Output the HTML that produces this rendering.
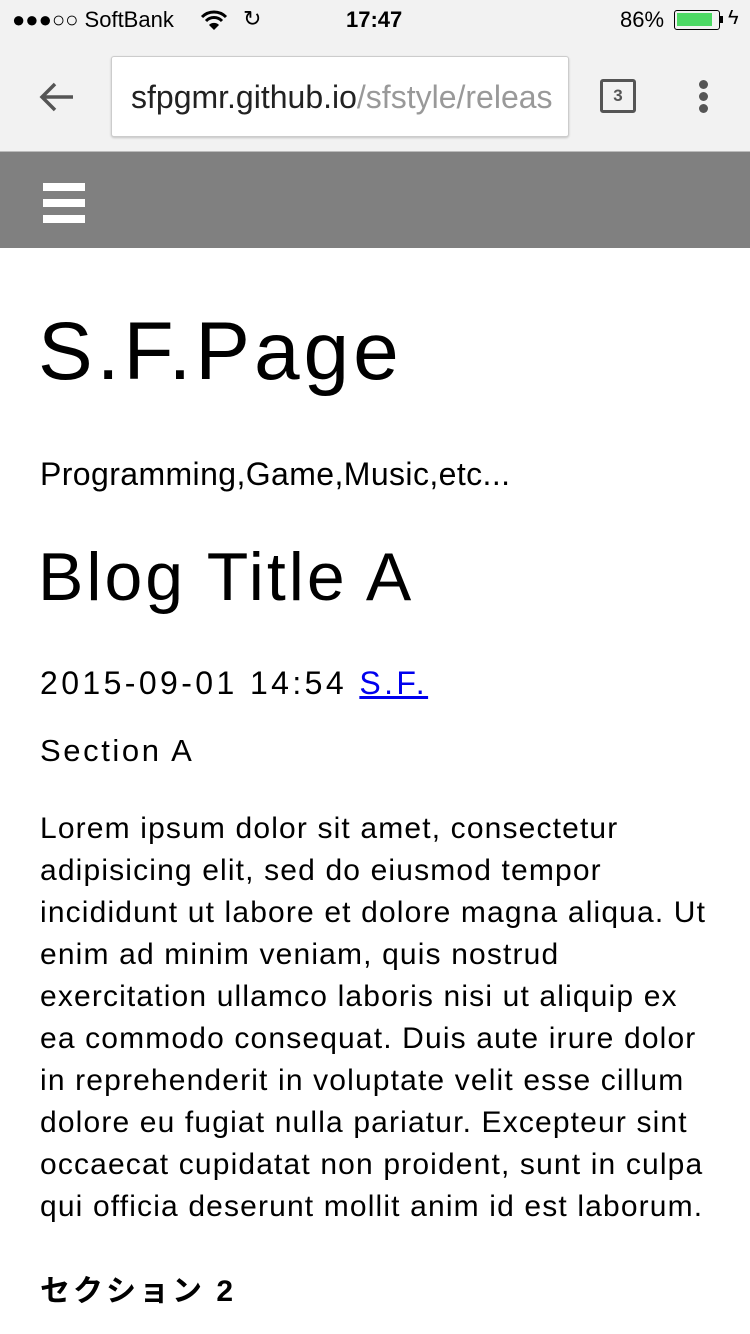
<!DOCTYPE html>
<html><head><meta charset="utf-8"><style>
*{margin:0;padding:0;box-sizing:border-box}
body{width:750px;height:1334px;overflow:hidden;background:#fff;font-family:"Liberation Sans","Noto Sans CJK JP",sans-serif;color:#000;position:relative}
.abs{position:absolute;white-space:nowrap}
#status{position:absolute;left:0;top:0;width:750px;height:40px;background:#f2f2f2}
#bar{position:absolute;left:0;top:40px;width:750px;height:112px;background:#f2f2f2;border-bottom:1px solid #bbb}
#url{position:absolute;left:111px;top:56px;width:458px;height:81px;background:#fff;border:1px solid #ccc;border-radius:3px;box-shadow:0 1px 2px rgba(0,0,0,.2);overflow:hidden}
#nav{position:absolute;left:0;top:152px;width:750px;height:96px;background:#808080}
.hb{position:absolute;left:43px;width:42px;height:8px;background:#fff}
</style></head><body>
<div id="status">
<div class="abs" style="left:12px;top:7px;font-size:22px;color:#000">●●●○○ SoftBank</div>
<svg class="abs" style="left:200px;top:10px" width="28" height="22" viewBox="0 0 28 22"><path d="M2 7 A17 17 0 0 1 26 7" stroke="#000" stroke-width="3" fill="none"/><path d="M6 11 A11 11 0 0 1 22 11" stroke="#000" stroke-width="3" fill="none"/><path d="M14 20 L9 15 A7 7 0 0 1 19 15Z" fill="#000"/></svg>
<div class="abs" style="left:243px;top:6px;font-size:22px">↻</div>
<div class="abs" style="left:346px;top:7px;font-size:22px;font-weight:bold">17:47</div>
<div class="abs" style="left:620px;top:7px;font-size:22px">86%</div>
<div class="abs" style="left:674px;top:10px;width:46px;height:20px;border:1.5px solid #000;border-radius:3px;padding:2px"><div style="width:35px;height:13px;background:#4cd964"></div></div>
<div class="abs" style="left:720px;top:16px;width:3px;height:7px;background:#000"></div>
<div class="abs" style="left:728px;top:7px;font-size:20px">ϟ</div>
</div>
<div id="bar"></div>
<svg class="abs" style="left:38px;top:80px" width="38" height="34" viewBox="0 0 38 34"><path d="M35 17 H5 M17 4 L4 17 L17 30" stroke="#555" stroke-width="3.5" fill="none"/></svg>
<div id="url"><div class="abs" style="left:19px;top:22px;font-size:32px;color:#222">sfpgmr.github.io<span style="color:#999">/sfstyle/releas</span></div></div>
<div class="abs" style="left:600px;top:79px;width:36px;height:34px;border:3px solid #555;border-radius:3px;font-size:17px;font-weight:bold;color:#555;text-align:center;line-height:28px">3</div>
<div class="abs" style="left:699px;top:80px;width:9px;height:9px;border-radius:50%;background:#555"></div>
<div class="abs" style="left:699px;top:92px;width:9px;height:9px;border-radius:50%;background:#555"></div>
<div class="abs" style="left:699px;top:104px;width:9px;height:9px;border-radius:50%;background:#555"></div>
<div id="nav"></div>
<div class="hb" style="top:183px"></div><div class="hb" style="top:199px"></div><div class="hb" style="top:215px"></div>
<div class="abs" style="left:38px;top:305px;font-size:82px;letter-spacing:4px">S.F.Page</div>
<div class="abs" style="left:40px;top:456px;font-size:32px;letter-spacing:0.4px">Programming,Game,Music,etc...</div>
<div class="abs" style="left:38px;top:538px;font-size:68px;letter-spacing:3px">Blog Title A</div>
<div class="abs" style="left:40px;top:665px;font-size:32px;letter-spacing:3.4px">2015-09-01 14:54 <span style="color:#00e;text-decoration:underline">S.F.</span></div>
<div class="abs" style="left:40px;top:733px;font-size:31px;letter-spacing:2.6px">Section A</div>
<div class="abs" style="left:40px;top:808px;font-size:30px;line-height:42px;letter-spacing:1.15px">Lorem ipsum dolor sit amet, consectetur<br>adipisicing elit, sed do eiusmod tempor<br>incididunt ut labore et dolore magna aliqua. Ut<br>enim ad minim veniam, quis nostrud<br>exercitation ullamco laboris nisi ut aliquip ex<br>ea commodo consequat. Duis aute irure dolor<br>in reprehenderit in voluptate velit esse cillum<br>dolore eu fugiat nulla pariatur. Excepteur sint<br>occaecat cupidatat non proident, sunt in culpa<br>qui officia deserunt mollit anim id est laborum.</div>
<div class="abs" style="left:40px;top:1266px;font-size:30px;font-weight:bold;letter-spacing:3px">セクション 2</div>
</body></html>
